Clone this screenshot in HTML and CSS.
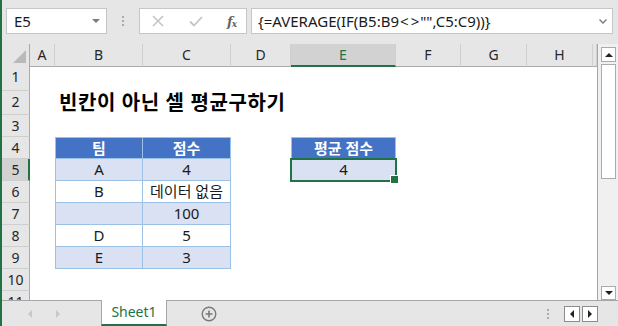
FILE: index.html
```html
<!doctype html>
<html>
<head>
  <meta charset="utf-8">
  <link rel="stylesheet" href="styles.css">
</head>
<body>
<div class="app">
  <div class="fbar">
    <div class="namebox">
      <span class="namebox_val">E5</span>
      <span class="caret"></span>
    </div>
    <div class="grip"><i></i><i></i><i></i></div>
    <div class="fxbox">
      <svg class="fx-ico" width="12" height="12" viewBox="0 0 12 12"><path d="M1 1 L11 11 M11 1 L1 11" stroke="#c4c4c4" stroke-width="1.6" fill="none"/></svg>
      <svg class="fx-ico" width="14" height="11" viewBox="0 0 14 11"><path d="M1 5.5 L5 9.5 L13 1" stroke="#c4c4c4" stroke-width="1.8" fill="none"/></svg>
      <span class="fx-txt">f<sub>x</sub></span>
    </div>
    <div class="formula">
      <span class="formula_val">{=AVERAGE(IF(B5:B9<span class="op">&lt;</span><span class="op">&gt;</span>"",C5:C9))}</span>
      <svg class="chev" width="8" height="5" viewBox="0 0 8 5"><path d="M0.5 0.5 L4 4 L7.5 0.5" stroke="#777" stroke-width="1.3" fill="none"/></svg>
    </div>
  </div>

  <div class="main">
    <div class="sheet">
      <div class="row hdr">
        <div class="rh corner"><span class="corner_tri"></span></div>
        <div class="ch cA">A</div>
        <div class="ch cB">B</div>
        <div class="ch cC">C</div>
        <div class="ch cD">D</div>
        <div class="ch cE on">E</div>
        <div class="ch cF">F</div>
        <div class="ch cG">G</div>
        <div class="ch cH">H</div>
        <div class="ch cI"></div>
      </div>
      <div class="row h25"><div class="rh">1</div></div>
      <div class="row h24">
        <div class="rh">2</div>
        <div class="title">빈칸이 아닌 셀 평균구하기</div>
      </div>
      <div class="row"><div class="rh">3</div></div>
      <div class="row">
        <div class="rh">4</div>
        <div class="c cB th first">팀</div>
        <div class="c cC th first">점수</div>
        <div class="c cE th first solo">평균 점수</div>
      </div>
      <div class="row">
        <div class="rh on">5</div>
        <div class="c cB tb lt">A</div>
        <div class="c cC tb lt">4</div>
        <div class="c cE tb lt solo sel">4</div>
      </div>
      <div class="row">
        <div class="rh">6</div>
        <div class="c cB tb">B</div>
        <div class="c cC tb">데이터 없음</div>
      </div>
      <div class="row">
        <div class="rh">7</div>
        <div class="c cB tb lt"></div>
        <div class="c cC tb lt">100</div>
      </div>
      <div class="row">
        <div class="rh">8</div>
        <div class="c cB tb">D</div>
        <div class="c cC tb">5</div>
      </div>
      <div class="row">
        <div class="rh">9</div>
        <div class="c cB tb lt">E</div>
        <div class="c cC tb lt">3</div>
      </div>
      <div class="row"><div class="rh">10</div></div>
      <div class="row"><div class="rh">11</div></div>
    </div>
    <div class="vscroll">
      <div class="sbtn"><span class="tri up"></span></div>
      <div class="thumb"></div>
      <div class="track"></div>
      <div class="sbtn dn"><span class="tri down"></span></div>
    </div>
  </div>

  <div class="tabs">
    <div class="tabnav">
      <span class="tri left pale"></span>
      <span class="tri right pale"></span>
    </div>
    <div class="tab">Sheet1</div>
    <svg class="addsheet" width="16" height="16" viewBox="0 0 16 16">
      <circle cx="8" cy="8" r="6.8" stroke="#7a7a7a" stroke-width="1.4" fill="none"/>
      <path d="M8 4.5 V11.5 M4.5 8 H11.5" stroke="#7a7a7a" stroke-width="1.6"/>
    </svg>
    <div class="tabs_fill"></div>
    <div class="grip small"><i></i><i></i><i></i></div>
    <div class="hbtns">
      <div class="hbtn"><span class="tri left"></span></div>
      <div class="hbtn"><span class="tri right"></span></div>
    </div>
  </div>
</div>
</body>
</html>
```

FILE: styles.css
```css
* {
  box-sizing: border-box;
}
body {
  margin: 0;
  font-family: "Noto Sans", "Noto Sans CJK KR", sans-serif;
  color: #1a1a1a;
}
.app {
  width: 618px;
  height: 326px;
  display: flex;
  flex-direction: column;
  background: #e6e6e6;
  border-left: 2px solid #217346;
  overflow: hidden;
}

/* formula bar */
.fbar {
  height: 44px;
  flex: none;
  display: flex;
  align-items: flex-start;
  padding: 8px 0 0 4px;
}
.namebox, .fxbox, .formula {
  height: 26px;
  background: #fff;
  border: 1px solid #c6c6c6;
  display: flex;
  align-items: center;
}
.namebox {
  width: 101px;
  padding: 0 5px 0 7px;
  justify-content: space-between;
}
.namebox_val, .formula_val {
  font-size: 15px;
  line-height: 1;
}
.formula_val .op {
  margin: 0 1px;
}
.caret {
  width: 0;
  height: 0;
  border-left: 4px solid transparent;
  border-right: 4px solid transparent;
  border-top: 4px solid #7a7a7a;
  margin-right: 1px;
}
.grip {
  width: 32px;
  height: 26px;
  display: flex;
  flex-direction: column;
  align-items: center;
  justify-content: center;
  gap: 2px;
}
.grip i {
  display: block;
  width: 2px;
  height: 2px;
  background: #ababab;
}
.fxbox {
  width: 108px;
  padding: 0 10px 0 12px;
  justify-content: space-between;
}
.fx-txt {
  font-family: "DejaVu Serif", serif;
  font-style: italic;
  font-weight: bold;
  font-size: 13px;
  color: #666;
  letter-spacing: -1px;
}
.fx-txt sub {
  font-size: 9px;
  vertical-align: -1px;
}
.formula {
  width: 362px;
  margin-left: 4px;
  padding: 0 5px 0 6px;
  justify-content: space-between;
}

/* sheet */
.main {
  flex: 1;
  display: flex;
  min-height: 0;
}
.sheet {
  width: 596px;
  flex: none;
  background: #fff;
  border-right: 1px solid #a6a6a6;
  overflow: hidden;
}
.row {
  display: grid;
  grid-template-columns: 28px 25px 88px 88px 60px 105px 65px 66px 66px 1fr;
  height: 22px;
}
.row.h25 { height: 25px; }
.row.h24 { height: 24px; }
.rh {
  grid-column: 1;
  background: #e6e6e6;
  border-right: 1px solid #a9a9a9;
  border-bottom: 1px solid #cfcfcf;
  font-size: 14px;
  line-height: 21px;
  text-align: center;
  color: #262626;
}
.rh.on {
  background: #d2d2d2;
  border-right: 2px solid #217346;
  padding-left: 1px;
}
.hdr .rh, .ch {
  border-bottom: 1px solid #a9a9a9;
}
.ch {
  background: #e6e6e6;
  border-right: 1px solid #cfcfcf;
  font-size: 14px;
  line-height: 21px;
  text-align: center;
  color: #262626;
}
.ch.on {
  background: #d2d2d2;
  color: #217346;
  border-bottom: 2px solid #217346;
}
.corner {
  display: flex;
  align-items: flex-end;
  justify-content: flex-end;
  padding: 0 3px 3px 0;
}
.corner_tri {
  width: 0;
  height: 0;
  border-left: 13px solid transparent;
  border-bottom: 13px solid #b9b9b9;
}
.cA { grid-column: 2; }
.cB { grid-column: 3; }
.cC { grid-column: 4; }
.cD { grid-column: 5; }
.cE { grid-column: 6; }
.cF { grid-column: 7; }
.cG { grid-column: 8; }
.cH { grid-column: 9; }
.cI { grid-column: 10; }

.title {
  grid-column: 3 / 8;
  padding-left: 4px;
  font-size: 20px;
  letter-spacing: 0.6px;
  font-weight: bold;
  line-height: 24px;
  color: #000;
  white-space: nowrap;
}
.c {
  font-size: 15px;
  line-height: 21px;
  text-align: center;
  white-space: nowrap;
}
.tb, .th {
  border-right: 1px solid #9bc2e6;
  border-bottom: 1px solid #9bc2e6;
}
.cB.tb, .cB.th, .solo {
  border-left: 1px solid #9bc2e6;
}
.th.first {
  border-top: 1px solid #9bc2e6;
  line-height: 20px;
}
.th {
  background: #4472c4;
  color: #fff;
  font-weight: bold;
}
.lt {
  background: #d9e1f2;
}
.sel {
  position: relative;
  z-index: 1;
  outline: 2px solid #217346;
  outline-offset: -1px;
}
.sel::after {
  content: "";
  position: absolute;
  right: -4px;
  bottom: -4px;
  width: 7px;
  height: 7px;
  background: #217346;
  border: 1px solid #fff;
}

/* vertical scrollbar */
.vscroll {
  flex: 1;
  display: flex;
  flex-direction: column;
  gap: 2px;
  padding: 3px 2px 0 3px;
  background: #f0f0f0;
}
.sbtn {
  height: 15px;
  background: #fff;
  border: 1px solid #ababab;
  display: flex;
  align-items: center;
  justify-content: center;
}
.sbtn.dn {
  height: 14px;
}
.thumb {
  height: 115px;
  background: #fff;
  border: 1px solid #ababab;
}
.track {
  flex: 1;
}
.tri {
  width: 0;
  height: 0;
  display: block;
}
.tri.up {
  border-left: 4px solid transparent;
  border-right: 4px solid transparent;
  border-bottom: 4px solid #222;
}
.tri.down {
  border-left: 4px solid transparent;
  border-right: 4px solid transparent;
  border-top: 4px solid #222;
}
.tri.left {
  border-top: 4px solid transparent;
  border-bottom: 4px solid transparent;
  border-right: 4px solid #222;
}
.tri.right {
  border-top: 4px solid transparent;
  border-bottom: 4px solid transparent;
  border-left: 4px solid #222;
}
.tri.pale.left { border-right-color: #c8c8c8; }
.tri.pale.right { border-left-color: #c8c8c8; }

/* sheet tabs */
.tabs {
  height: 26px;
  flex: none;
  display: flex;
  align-items: center;
  border-top: 1px solid #a6a6a6;
}
.tabnav {
  width: 99px;
  display: flex;
  gap: 24px;
  padding-left: 26px;
}
.tab {
  align-self: stretch;
  width: 66px;
  margin-top: -1px;
  background: #fff;
  border-left: 1px solid #a6a6a6;
  border-right: 1px solid #a6a6a6;
  border-bottom: 2px solid #217346;
  color: #217346;
  font-size: 14px;
  line-height: 24px;
  text-align: center;
}
.addsheet {
  margin-left: 34px;
}
.tabs_fill {
  flex: 1;
}
.grip.small {
  width: 10px;
  height: 16px;
  gap: 2px;
}
.hbtns {
  display: flex;
  gap: 2px;
  margin: 0 20px 0 11px;
}
.hbtn {
  width: 16px;
  height: 16px;
  background: #fff;
  border: 1px solid #8c8c8c;
  display: flex;
  align-items: center;
  justify-content: center;
}
```
